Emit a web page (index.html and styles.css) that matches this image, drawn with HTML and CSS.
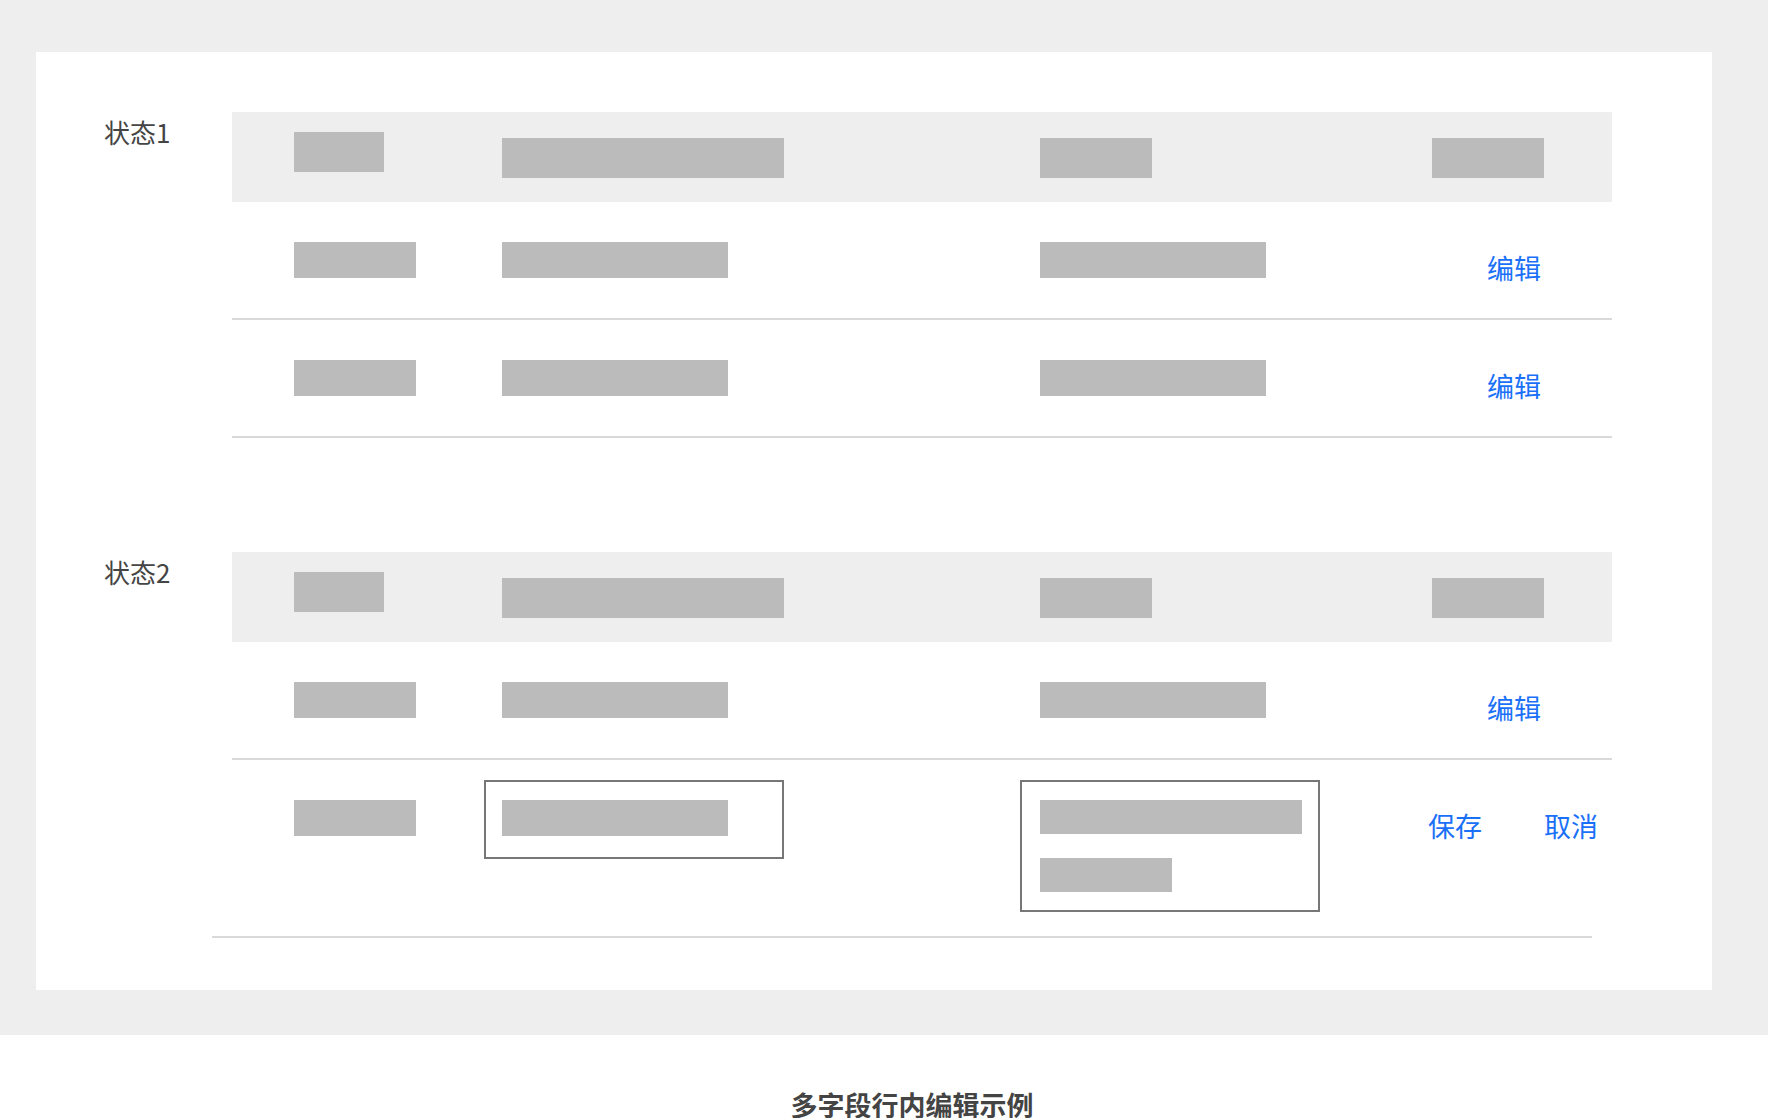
FILE: index.html
```html
<!DOCTYPE html>
<html lang="zh-CN">
<head>
    <meta charset="UTF-8">
    <meta name="viewport" content="width=device-width, initial-scale=1.0">
    <title>多字段行内编辑示例</title>
    <link rel="stylesheet" href="styles.css">
</head>
<body>

<div class="stage">
    <div class="panel">

        <div class="section">
            <div class="label">状态1</div>
            <div class="table">
                <div class="row head">
                    <div class="col c1"><span class="bar w90 up"></span></div>
                    <div class="col c2"><span class="bar w282"></span></div>
                    <div class="col c3"><span class="bar w112"></span></div>
                    <div class="col c4"><span class="bar w112"></span></div>
                </div>
                <div class="row">
                    <div class="col c1"><span class="bar w122 short"></span></div>
                    <div class="col c2"><span class="bar w226 short"></span></div>
                    <div class="col c3"><span class="bar w226 short"></span></div>
                    <div class="col c4 actions"><a class="link">编辑</a></div>
                </div>
                <div class="row">
                    <div class="col c1"><span class="bar w122 short"></span></div>
                    <div class="col c2"><span class="bar w226 short"></span></div>
                    <div class="col c3"><span class="bar w226 short"></span></div>
                    <div class="col c4 actions"><a class="link">编辑</a></div>
                </div>
            </div>
        </div>

        <div class="section second">
            <div class="label">状态2</div>
            <div class="table">
                <div class="row head">
                    <div class="col c1"><span class="bar w90 up"></span></div>
                    <div class="col c2"><span class="bar w282"></span></div>
                    <div class="col c3"><span class="bar w112"></span></div>
                    <div class="col c4"><span class="bar w112"></span></div>
                </div>
                <div class="row">
                    <div class="col c1"><span class="bar w122 short"></span></div>
                    <div class="col c2"><span class="bar w226 short"></span></div>
                    <div class="col c3"><span class="bar w226 short"></span></div>
                    <div class="col c4 actions"><a class="link">编辑</a></div>
                </div>
                <div class="row editing">
                    <div class="col c1"><span class="bar w122 short"></span></div>
                    <div class="col c2">
                        <div class="field one">
                            <span class="bar w226 short"></span>
                        </div>
                    </div>
                    <div class="col c3">
                        <div class="field two">
                            <span class="bar w262 short"></span>
                            <span class="bar w132 short"></span>
                        </div>
                    </div>
                    <div class="col c4 actions">
                        <a class="link">保存</a>
                        <a class="link">取消</a>
                    </div>
                </div>
                <div class="rule"></div>
            </div>
        </div>

    </div>
</div>

<div class="caption">多字段行内编辑示例</div>

</body>
</html>
```

FILE: styles.css
```css
body, html {
    margin: 0;
    background-color: #fff;
    font-family: "Noto Sans CJK SC", "Noto Sans", sans-serif;
    color: #444;
}

.stage {
    background-color: #eee;
    padding: 52px 56px 45px 36px;
}

.panel {
    background-color: #fff;
    height: 938px;
    padding-top: 60px;
    box-sizing: border-box;
}

.section {
    display: flex;
}

.section.second {
    margin-top: 114px;
}

.label {
    width: 196px;
    padding-left: 68px;
    box-sizing: border-box;
    font-size: 26px;
    line-height: 36px;
    margin-top: 2px;
    color: #444;
}

.table {
    width: 1380px;
}

.row {
    display: flex;
    height: 118px;
    padding-top: 40px;
    box-sizing: border-box;
    border-bottom: 2px solid #d9d9d9;
}

.row.head {
    background-color: #eee;
    height: 90px;
    padding-top: 26px;
    border-bottom: none;
}

.row.editing {
    height: 176px;
    padding-top: 20px;
    border-bottom: none;
}

.col {
    flex: none;
}

.c1 { width: 270px; padding-left: 62px; box-sizing: border-box; }
.c2 { width: 538px; }
.c3 { width: 392px; }
.c4 { flex: 1; }

.row.editing .c1 { padding-top: 20px; }
.row.editing .c2 { margin-left: -18px; width: 536px; }
.row.editing .c3 { width: 408px; }

.bar {
    display: block;
    height: 40px;
    background-color: #bbb;
}

.bar.short { height: 36px; }
.bar.up { margin-top: -6px; }

.w90 { width: 90px; }
.w112 { width: 112px; }
.w122 { width: 122px; }
.w132 { width: 132px; }
.w226 { width: 226px; }
.w262 { width: 262px; }
.w282 { width: 282px; }

.field {
    width: 300px;
    border: 2px solid #777;
    box-sizing: border-box;
}

.field.one {
    height: 79px;
    padding: 18px 16px;
}

.field.two {
    height: 132px;
    padding: 18px 18px;
    display: flex;
    flex-direction: column;
    gap: 24px;
}

.actions {
    display: flex;
    gap: 62px;
    padding-left: 55px;
    padding-top: 8px;
}

.row.editing .actions {
    padding-left: 0;
    padding-top: 28px;
}

.link {
    font-size: 27px;
    line-height: 36px;
    color: #1a70f8;
    cursor: pointer;
}

.rule {
    height: 2px;
    background-color: #d9d9d9;
    margin-left: -20px;
    margin-right: 20px;
}

.caption {
    margin-top: 56px;
    padding-left: 56px;
    text-align: center;
    font-size: 27px;
    line-height: 27px;
    font-weight: bold;
    color: #444;
}
```
